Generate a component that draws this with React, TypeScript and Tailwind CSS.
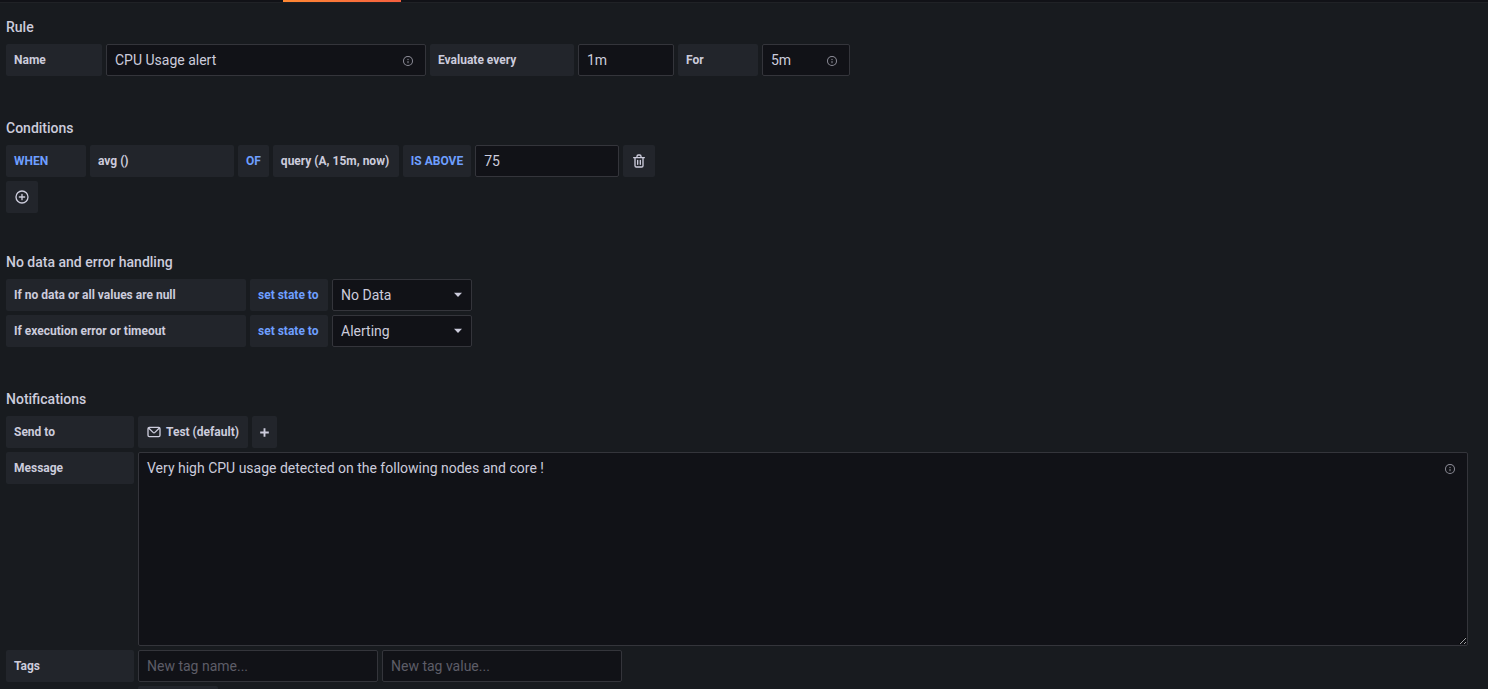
import { useState } from "react";
import type { ReactNode } from "react";
import clsx from "clsx";

const icons = {
  info: "M12,2A10,10,0,1,0,22,12,10,10,0,0,0,12,2Zm0,18a8,8,0,1,1,8-8A8,8,0,0,1,12,20Zm0-8.5a1,1,0,0,0-1,1v3a1,1,0,0,0,2,0v-3A1,1,0,0,0,12,11.5Zm0-4a1.25,1.25,0,1,0,1.25,1.25A1.25,1.25,0,0,0,12,7.5Z",
  plusCircle:
    "M12,2A10,10,0,1,0,22,12,10,10,0,0,0,12,2Zm0,18a8,8,0,1,1,8-8A8,8,0,0,1,12,20Zm4-9H13V8a1,1,0,0,0-2,0v3H8a1,1,0,0,0,0,2h3v3a1,1,0,0,0,2,0V13h3a1,1,0,0,0,0-2Z",
  trash:
    "M10,18a1,1,0,0,0,1-1V11a1,1,0,0,0-2,0v6A1,1,0,0,0,10,18ZM20,6H16V5a3,3,0,0,0-3-3H11A3,3,0,0,0,8,5V6H4A1,1,0,0,0,4,8H5V19a3,3,0,0,0,3,3h8a3,3,0,0,0,3-3V8h1a1,1,0,0,0,0-2ZM10,5a1,1,0,0,1,1-1h2a1,1,0,0,1,1,1V6H10Zm7,14a1,1,0,0,1-1,1H8a1,1,0,0,1-1-1V8H17Zm-3-1a1,1,0,0,0,1-1V11a1,1,0,0,0-2,0v6A1,1,0,0,0,14,18Z",
  envelope:
    "M19,4H5A3,3,0,0,0,2,7V17a3,3,0,0,0,3,3H19a3,3,0,0,0,3-3V7A3,3,0,0,0,19,4Zm-.41,2-5.88,5.88a1,1,0,0,1-1.42,0L5.41,6ZM20,17a1,1,0,0,1-1,1H5a1,1,0,0,1-1-1V7.41l5.88,5.88a3,3,0,0,0,4.24,0L20,7.41Z",
  plus: "M14.5,0.5V9.5H23.5V14.5H14.5V23.5H9.5V14.5H0.5V9.5H9.5V0.5Z",
  caret: "M4,7.5H20L12,16Z",
};

const Icon = ({ name, className }: { name: keyof typeof icons; className?: string }) => (
  <svg viewBox="0 0 24 24" fill="currentColor" aria-hidden="true" className={clsx("shrink-0", className)}>
    <path d={icons[name]} />
  </svg>
);

const box = "flex h-8 shrink-0 items-center rounded-xs bg-[#22252b] px-2 text-xs font-bold whitespace-nowrap";
const field =
  "h-8 rounded-xs border border-[#34353b] bg-[#111217] px-2 text-sm text-[#ccccdc] outline-none placeholder:text-[#5d5d67] focus:border-[#6e9fff]";

const Section = ({ title, className, children }: { title: string; className?: string; children: ReactNode }) => (
  <section className={className}>
    <h5 className="mb-2 text-sm leading-[18px] font-medium">{title}</h5>
    {children}
  </section>
);

const Row = ({ children }: { children: ReactNode }) => <div className="mb-1 flex gap-1">{children}</div>;

const InfoIcon = () => <Icon name="info" className="absolute top-[11px] right-3 h-3 w-3 text-[#8e8e99]" />;

const StateSelect = ({ id, label, value }: { id: string; label: string; value: string }) => {
  const [state, setState] = useState(value);

  return (
    <Row>
      <label htmlFor={id} className={clsx(box, "w-60")}>
        {label}
      </label>
      <span className={clsx(box, "min-w-[78px] text-[#6e9fff]")}>set state to</span>
      <div className="relative">
        <select
          id={id}
          value={state}
          onChange={(e) => setState(e.target.value)}
          className={clsx(field, "w-[140px] appearance-none")}
        >
          <option>Alerting</option>
          <option>No Data</option>
          <option>Keep Last State</option>
          <option>Ok</option>
        </select>
        <Icon name="caret" className="pointer-events-none absolute top-2.5 right-2 h-3 w-3" />
      </div>
    </Row>
  );
};

const App = () => {
  return (
    <div className="min-h-screen bg-[#181b1f] font-[Roboto,sans-serif] text-[#ccccdc]">
      <div className="h-[3px] border-b border-[#202226] bg-[#111217]">
        <div className="ml-[283px] h-0.5 w-[118px] bg-linear-to-r from-[#ff8833] to-[#f55f3e]" />
      </div>

      <form className="pt-[15px] pr-5 pl-1.5" onSubmit={(e) => e.preventDefault()}>
        <Section title="Rule" className="mb-[43px]">
          <Row>
            <label htmlFor="name" className={clsx(box, "w-24")}>
              Name
            </label>
            <div className="relative">
              <input id="name" defaultValue="CPU Usage alert" className={clsx(field, "w-80")} />
              <InfoIcon />
            </div>
            <label htmlFor="frequency" className={clsx(box, "w-36")}>
              Evaluate every
            </label>
            <input id="frequency" defaultValue="1m" className={clsx(field, "w-24")} />
            <label htmlFor="for" className={clsx(box, "w-20")}>
              For
            </label>
            <div className="relative">
              <input id="for" defaultValue="5m" className={clsx(field, "w-[88px]")} />
              <InfoIcon />
            </div>
          </Row>
        </Section>

        <Section title="Conditions" className="mb-10">
          <Row>
            <span className={clsx(box, "w-20 text-[#6e9fff]")}>WHEN</span>
            <button type="button" className={clsx(box, "w-36")}>
              avg ()
            </button>
            <span className={clsx(box, "text-[#6e9fff]")}>OF</span>
            <button type="button" className={clsx(box, "min-w-[126px]")}>
              query (A, 15m, now)
            </button>
            <button type="button" className={clsx(box, "text-[#6e9fff]")}>
              IS ABOVE
            </button>
            <input aria-label="Threshold" defaultValue="75" className={clsx(field, "w-36")} />
            <button type="button" aria-label="Delete condition" className={box}>
              <Icon name="trash" className="h-4 w-4" />
            </button>
          </Row>
          <button type="button" aria-label="Add condition" className={box}>
            <Icon name="plusCircle" className="h-4 w-4" />
          </button>
        </Section>

        <Section title="No data and error handling" className="mb-[43px]">
          <StateSelect id="no-data-state" label="If no data or all values are null" value="No Data" />
          <StateSelect id="error-state" label="If execution error or timeout" value="Alerting" />
        </Section>

        <Section title="Notifications">
          <Row>
            <span className={clsx(box, "w-32")}>Send to</span>
            <span className={clsx(box, "min-w-[110px] gap-1")}>
              <Icon name="envelope" className="h-4 w-4" />
              Test (default)
            </span>
            <button type="button" aria-label="Add notification channel" className={box}>
              <Icon name="plus" className="h-[9px] w-[9px]" />
            </button>
          </Row>
          <Row>
            <label htmlFor="message" className={clsx(box, "w-32")}>
              Message
            </label>
            <div className="relative flex flex-1">
              <textarea
                id="message"
                defaultValue="Very high CPU usage detected on the following nodes and core !"
                className={clsx(field, "h-[194px] w-full resize py-[5px]")}
              />
              <InfoIcon />
            </div>
          </Row>
          <Row>
            <span className={clsx(box, "w-32")}>Tags</span>
            <input aria-label="New tag name" placeholder="New tag name..." className={clsx(field, "w-60")} />
            <input aria-label="New tag value" placeholder="New tag value..." className={clsx(field, "w-60")} />
          </Row>
          <div className="ml-[132px] h-[3px] w-20 rounded-t-xs bg-[#22252b]" />
        </Section>
      </form>
    </div>
  );
};

export default App;
